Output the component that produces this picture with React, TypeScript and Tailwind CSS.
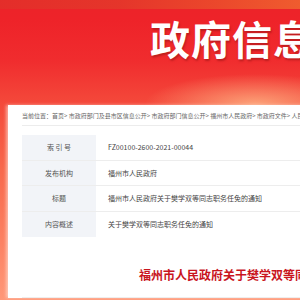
const rows = [
  { label: "索 引 号", value: "FZ00100-2600-2021-00044" },
  { label: "发布机构", value: "福州市人民政府" },
  { label: "标题", value: "福州市人民政府关于樊学双等同志职务任免的通知" },
  { label: "内容概述", value: "关于樊学双等同志职务任免的通知" },
];

const crumbs = ["首页", "市政府部门及县市区信息公开", "市政府部门信息公开", "福州市人民政府", "市政府文件", "人民政府文件"];

export default function App() {
  return (
    <div className="w-[300px] h-[300px] overflow-hidden font-['Noto_Sans_CJK_SC','Noto_Sans',sans-serif] bg-[radial-gradient(ellipse_110px_30px_at_255px_104px,rgba(255,190,140,0.75),transparent),linear-gradient(180deg,#ec2329_0px,#ee2329_20px,#f02c2e_60px,#f44a3b_105px,#f8694c_170px,#fc8162_240px,#ff9878_300px)]">
      {/* banner */}
      <div className="h-[105px] flex flex-col">
        <div className="h-[9px] bg-[linear-gradient(90deg,#e2302a_0%,#e33a2b_40%,#ea4f2c_70%,#f06a30_100%)] opacity-80" />
        <div className="pl-[150px] pt-[4px] whitespace-nowrap text-[40px] leading-[50px] font-bold text-white tracking-[1px] [text-shadow:1px_2px_2px_rgba(150,20,20,0.55)]">
          政府信息公开
        </div>
      </div>

      {/* card */}
      <div className="ml-[8px] w-[620px] bg-white px-[14px] shadow-[-2px_0_3px_rgba(255,230,220,0.6)]">
        <div className="h-[21px] flex items-center border-b border-[#ececec] text-[6px] text-[#666] whitespace-nowrap">
          当前位置：
          {crumbs.map((c, i) => (
            <span key={i}>
              {i > 0 && <span> &gt; </span>}
              {c}
            </span>
          ))}
        </div>

        <div className="mt-[9px] w-[560px] text-[7px] text-[#444]">
          {rows.map((r, i) => (
            <div key={i} className={`flex h-[25.5px] ${i < rows.length - 1 ? "border-b border-[#ededed]" : ""}`}>
              <div className="w-[74px] bg-[#f2f4f8] flex items-center justify-center text-[#555]">{r.label}</div>
              <div className="flex-1 flex items-center pl-[12px] whitespace-nowrap">{r.value}</div>
            </div>
          ))}
        </div>

        <div className="h-[61px] border-b border-[#eeeeee] pl-[117px] pt-[30px] whitespace-nowrap text-[12px] leading-[16px] font-bold text-[#c9151e]">
          福州市人民政府关于樊学双等同志职务任免的通知
        </div>
      </div>
    </div>
  );
}
